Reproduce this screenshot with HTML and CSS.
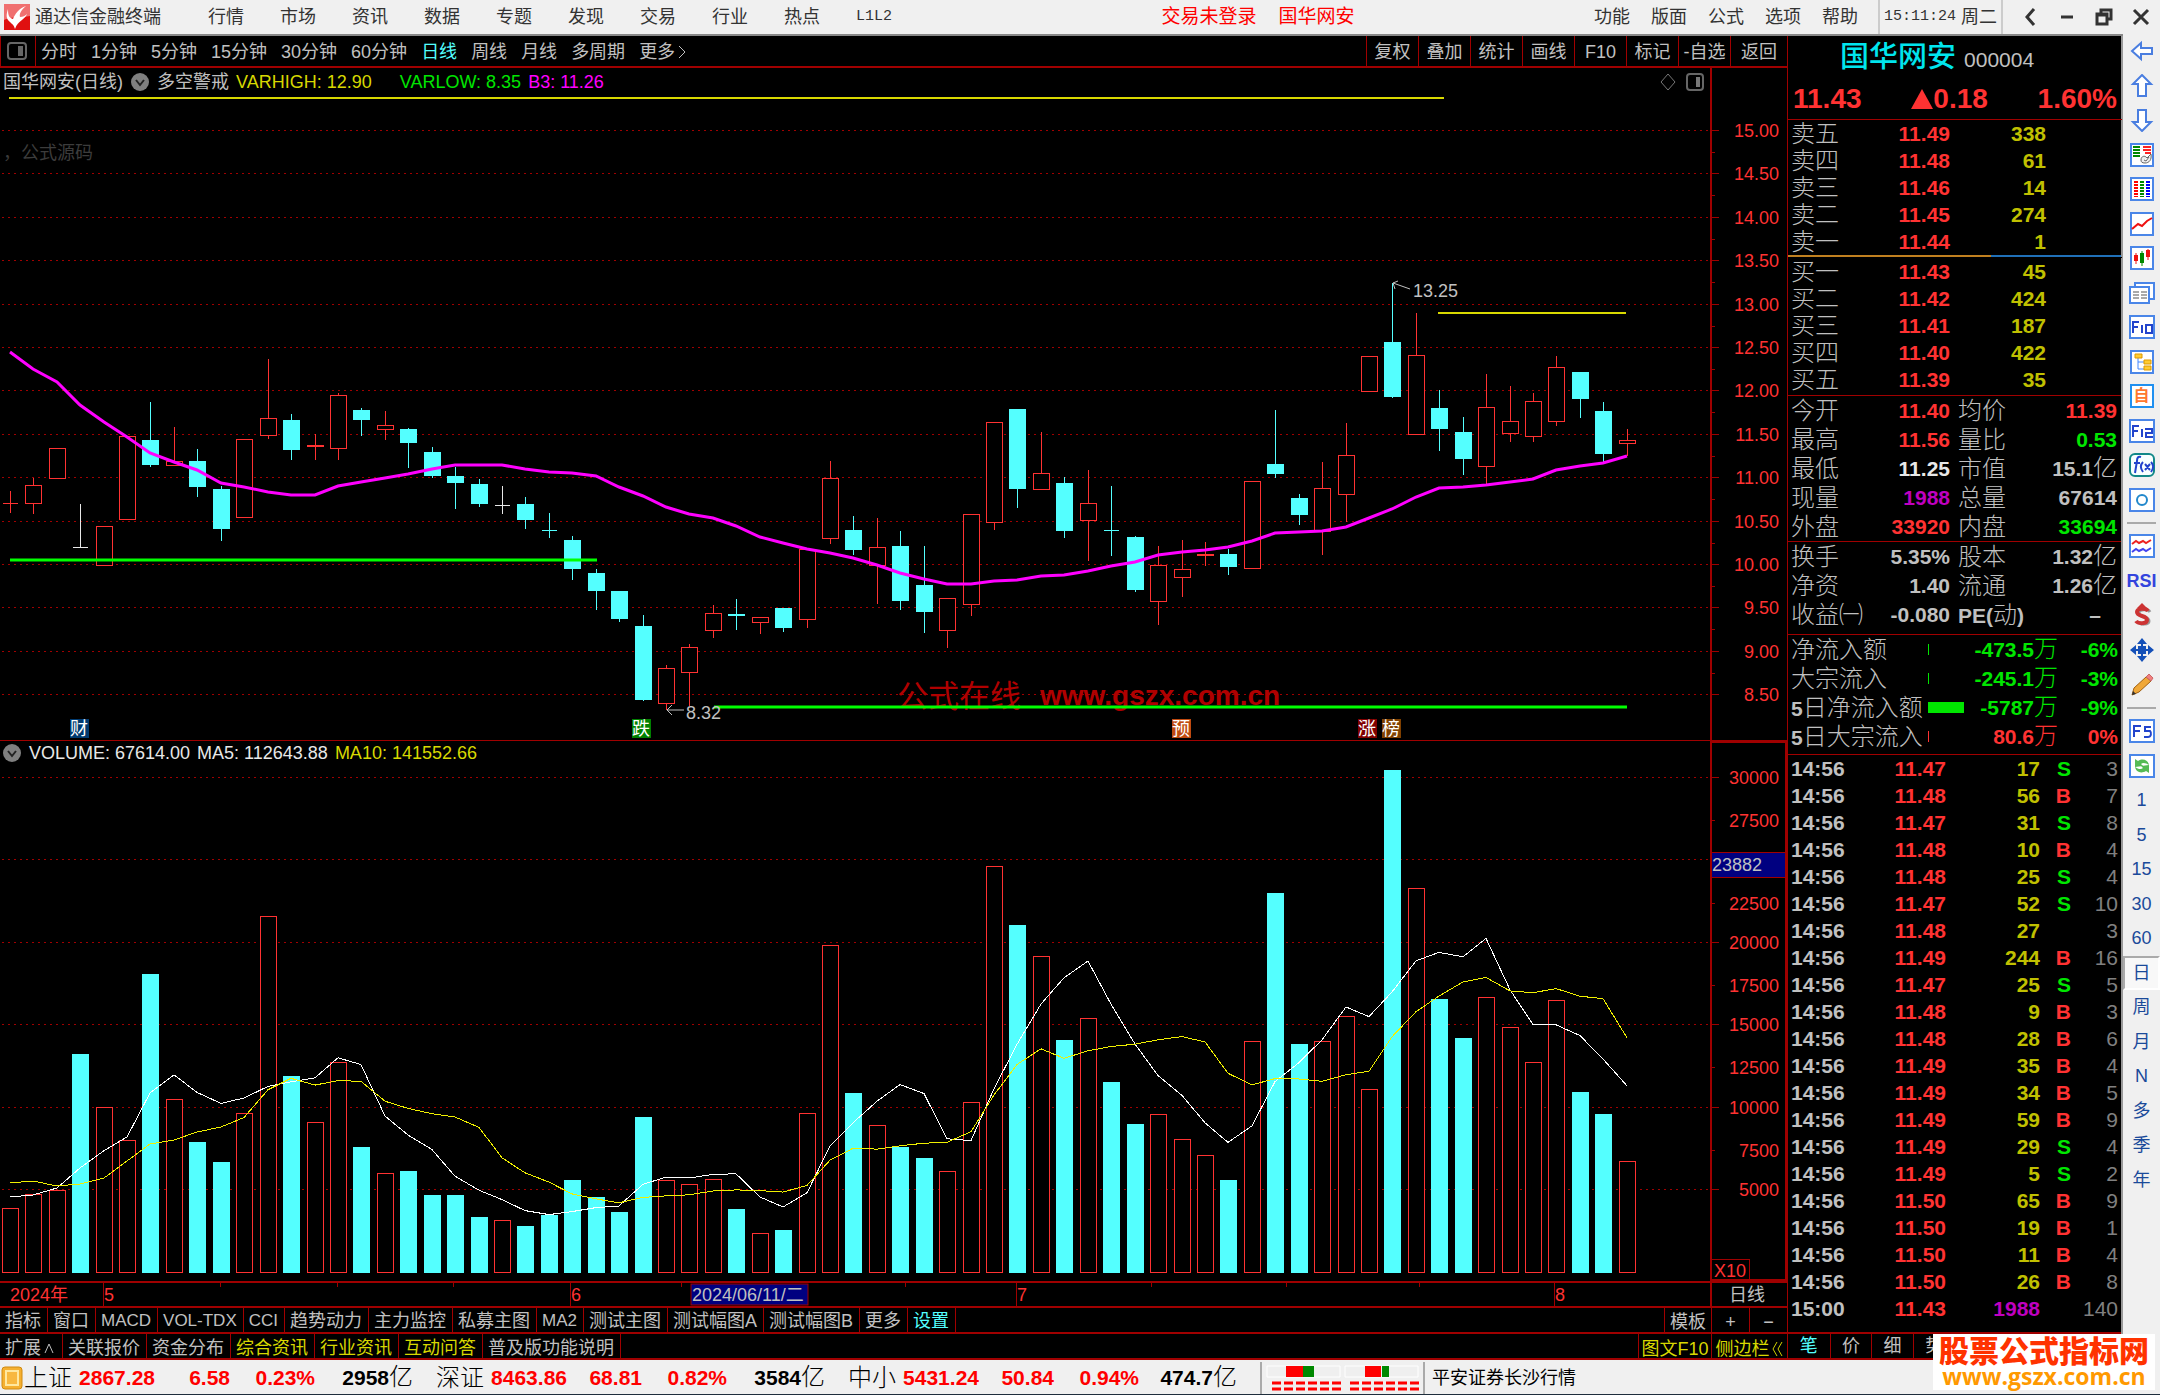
FILE: index.html
```html
<!DOCTYPE html>
<html lang="zh-CN">
<head>
<meta charset="utf-8">
<title>通达信金融终端</title>
<link rel="stylesheet" href="styles.css">
</head>
<body>
<header class="menubar">
  <svg class="logo" width="26" height="26" viewBox="0 0 26 26"><rect width="26" height="26" fill="#e01010"/><path d="M0 0h26v12C18 14 8 12 0 16z" fill="#f07070"/><path d="M4 5c0 6 1 9 5 10 2-5 6-11 13-13-5 4-7 8-6 11 3 0 5-1 7-3-2 6-9 6-12 15-1-4-3-5-5-7-4-3-4-7-2-13z" fill="#fff"/></svg>
  <span class="app-name">通达信金融终端</span>
  <nav class="menus">
    <button>行情</button><button>市场</button><button>资讯</button><button>数据</button><button>专题</button><button>发现</button><button>交易</button><button>行业</button><button>热点</button><button class="mono">L1L2</button>
  </nav>
  <div class="login"><a href="#login">交易未登录</a><a href="#stock">国华网安</a></div>
  <nav class="tools"><button>功能</button><button>版面</button><button>公式</button><button>选项</button><button>帮助</button></nav>
  <div class="clock"><span class="mono">15:11:24</span><span>周二</span></div>
  <div class="window-buttons">
    <button aria-label="后退"><svg width="18" height="18" viewBox="0 0 18 18"><path d="M13 1L6 9l7 8" class="win"/></svg></button>
    <button aria-label="最小化"><svg width="18" height="18" viewBox="0 0 18 18"><path d="M3 9h12" class="win"/></svg></button>
    <button aria-label="还原"><svg width="18" height="18" viewBox="0 0 18 18"><path d="M6 5V2h10v9h-3M2 6h10v10H2zM2 7h10" class="win"/></svg></button>
    <button aria-label="关闭"><svg width="18" height="18" viewBox="0 0 18 18"><path d="M2 2l14 14M16 2L2 16" class="win"/></svg></button>
  </div>
</header>

<main class="workspace">
  <section class="charts">
    <div class="toolbar">
      <button class="layout-toggle" aria-label="侧栏"><svg width="20" height="18" viewBox="0 0 20 18"><rect x="1" y="1" width="18" height="16" rx="3" fill="none" stroke="#666" stroke-width="2"/><rect x="11" y="4" width="5" height="10" fill="#666"/></svg></button>
      <div class="periods">
        <button>分时</button><button>1分钟</button><button>5分钟</button><button>15分钟</button><button>30分钟</button><button>60分钟</button><button class="on">日线</button><button>周线</button><button>月线</button><button>多周期</button><button>更多<svg width="12" height="16" viewBox="0 0 12 16"><path d="M4 2l6 6-6 6" fill="none" stroke="#c0c0c0"/></svg></button>
      </div>
      <div class="actions">
        <button>复权</button><button>叠加</button><button>统计</button><button>画线</button><button>F10</button><button>标记</button><button>-自选</button><button>返回</button>
      </div>
    </div>

    <div class="pane-head">
      <div class="legend">
        <span>国华网安(日线)</span>
        <svg width="20" height="20" viewBox="0 0 20 20"><circle cx="10" cy="10" r="9" fill="#808080"/><path d="M6 8l4 5 4-5" fill="none" stroke="#222" stroke-width="2"/></svg>
        <span>多空警戒</span><span class="yellow">VARHIGH: 12.90</span><span class="green second">VARLOW: 8.35</span><span class="magenta">B3: 11.26</span>
        <span class="pane-icons"><svg width="16" height="18" viewBox="0 0 16 18"><path d="M8 1l7 8-7 8-7-8z" fill="none" stroke="#777"/></svg><svg width="18" height="18" viewBox="0 0 18 18"><rect x="1" y="1" width="16" height="16" rx="3" fill="none" stroke="#666" stroke-width="2"/><rect x="10" y="4" width="4" height="10" fill="#777"/></svg></span>
      </div>
    </div>
    <svg id="price" class="plot" viewBox="0 96 1787 644"></svg>

    <div class="pane-head volume">
      <div class="legend">
        <svg width="20" height="20" viewBox="0 0 20 20"><circle cx="10" cy="10" r="9" fill="#808080"/><path d="M6 8l4 5 4-5" fill="none" stroke="#222" stroke-width="2"/></svg>
        <span class="white">VOLUME: 67614.00</span><span class="white">MA5: 112643.88</span><span class="yellow">MA10: 141552.66</span>
      </div>
      <div class="axis-top"></div>
    </div>
    <svg id="volume" class="plot" viewBox="0 765 1787 516"></svg>
    <svg id="dates" class="plot" viewBox="0 1281 1787 25"></svg>

    <div class="tabs">
      <button>指标</button><button>窗口</button><button class="latin">MACD</button><button class="latin">VOL-TDX</button><button class="latin">CCI</button><button>趋势动力</button><button>主力监控</button><button>私募主图</button><button class="latin">MA2</button><button>测试主图</button><button>测试幅图A</button><button>测试幅图B</button><button>更多</button><button class="cyan">设置</button>
      <div class="tabs-end first"><button>模板</button><button>+</button><button>−</button></div>
    </div>
    <div class="tabs">
      <button>扩展<svg width="15" height="12" viewBox="0 0 15 12"><path d="M4 11l4-9 4 9" fill="none" stroke="#c0c0c0"/></svg></button><button>关联报价</button><button>资金分布</button><button class="yellow">综合资讯</button><button class="yellow">行业资讯</button><button class="yellow">互动问答</button><button>普及版功能说明</button>
      <div class="tabs-end second yellow"><button>图文F10</button><button>侧边栏<svg width="14" height="16" viewBox="0 0 14 16"><path d="M7 1L3 8l4 7M12 1L8 8l4 7" fill="none" stroke="#d0d000"/></svg></button></div>
    </div>
  </section>

  <aside class="quote">
    <div class="quote-head">
      <h1>国华网安 <small>000004</small></h1>
      <p><b>11.43</b><b><svg width="22" height="20" viewBox="0 0 22 20"><path d="M11 0l11 20H0z" fill="#ff3232"/></svg>0.18</b><b>1.60%</b></p>
    </div>
    <table class="book"><tbody>
      <tr><th>卖五</th><td>11.49</td><td>338</td></tr>
      <tr><th>卖四</th><td>11.48</td><td>61</td></tr>
      <tr><th>卖三</th><td>11.46</td><td>14</td></tr>
      <tr><th>卖二</th><td>11.45</td><td>274</td></tr>
      <tr><th>卖一</th><td>11.44</td><td>1</td></tr>
    </tbody></table>
    <div class="ratio"></div>
    <table class="book"><tbody>
      <tr><th>买一</th><td>11.43</td><td>45</td></tr>
      <tr><th>买二</th><td>11.42</td><td>424</td></tr>
      <tr><th>买三</th><td>11.41</td><td>187</td></tr>
      <tr><th>买四</th><td>11.40</td><td>422</td></tr>
      <tr><th>买五</th><td>11.39</td><td>35</td></tr>
    </tbody></table>
    <table class="stats"><tbody>
      <tr><th>今开</th><td class="red">11.40</td><th>均价</th><td class="red">11.39</td></tr>
      <tr><th>最高</th><td class="red">11.56</td><th>量比</th><td class="green">0.53</td></tr>
      <tr><th>最低</th><td class="white">11.25</td><th>市值</th><td>15.1<i>亿</i></td></tr>
      <tr><th>现量</th><td class="purple">1988</td><th>总量</th><td>67614</td></tr>
      <tr><th>外盘</th><td class="red">33920</td><th>内盘</th><td class="green">33694</td></tr>
    </tbody></table>
    <table class="stats extra"><tbody>
      <tr><th>换手</th><td>5.35%</td><th>股本</th><td>1.32<i>亿</i></td></tr>
      <tr><th>净资</th><td>1.40</td><th>流通</th><td>1.26<i>亿</i></td></tr>
      <tr><th>收益㈠</th><td>-0.080</td><th><b>PE(</b>动<b>)</b></th><td class="dash">–</td></tr>
    </tbody></table>
    <table class="flow"><tbody>
      <tr><th>净流入额</th><td><span class="bar"></span></td><td>-473.5<i>万</i></td><td>-6%</td></tr>
      <tr><th>大宗流入</th><td><span class="bar"></span></td><td>-245.1<i>万</i></td><td>-3%</td></tr>
      <tr><th><b>5</b>日净流入额</th><td><span class="bar" style="width:36px"></span></td><td>-5787<i>万</i></td><td>-9%</td></tr>
      <tr class="red"><th><b>5</b>日大宗流入</th><td><span class="bar"></span></td><td>80.6<i>万</i></td><td>0%</td></tr>
    </tbody></table>
    <table class="ticks"><tbody id="ticks"></tbody></table>
    <div class="quote-tabs"><button class="cyan">笔</button><button>价</button><button>细</button><button>势</button><button aria-label="页五"></button><button aria-label="页六"></button><button aria-label="页七"></button><button aria-label="页八"></button></div>
    <div class="site-badge"><strong>股票公式指标网</strong><span>www.gszx.com.cn</span></div>
  </aside>

  <nav class="rail">
    <div class="rail-long">
      <button aria-label="后退"><svg width="24" height="24" viewBox="0 0 24 24"><path d="M2 12l9-8v5h11v6H11v5z" class="arrow"/></svg></button>
      <button aria-label="上"><svg width="24" height="24" viewBox="0 0 24 24"><path d="M12 1l9 9h-5v12H8V10H3z" class="arrow"/></svg></button>
      <button aria-label="下"><svg width="24" height="24" viewBox="0 0 24 24"><path d="M12 23l9-9h-5V2H8v12H3z" class="arrow"/></svg></button>
      <button aria-label="报价"><svg width="24" height="24" viewBox="0 0 24 24"><rect x="1" y="1" width="22" height="22" class="frame"/><path d="M3 4h7M3 7h7M3 10h7M3 13h7" stroke="#080" stroke-width="2"/><path d="M13 4h8M13 7h8M15 10h6" stroke="#f22" stroke-width="2"/><path d="M11 17c0-4 4-5 6-2l4-4c1 6-2 9-6 9-3 0-4-1-4-3zM14 17l2 1 3-4" fill="#eee" stroke="#666"/></svg></button>
      <button aria-label="列表"><svg width="24" height="24" viewBox="0 0 24 24"><rect x="1" y="1" width="22" height="22" class="frame"/><g stroke-width="4" stroke-dasharray="2 1"><path d="M6 4v16" stroke="#f00"/><path d="M12 4v16" stroke="#080"/><path d="M18 4v16" stroke="#00f"/></g></svg></button>
      <button aria-label="分时图"><svg width="24" height="24" viewBox="0 0 24 24"><rect x="1" y="1" width="22" height="22" class="frame"/><path d="M2 17l6-5 4 2 5-5 5-3" fill="none" stroke="#e11" stroke-width="2"/></svg></button>
      <button aria-label="K线图"><svg width="24" height="24" viewBox="0 0 24 24"><rect x="1" y="1" width="22" height="22" class="frame"/><path d="M6 7v11M18 3v11" stroke="#e11"/><path d="M12 5v15" stroke="#080"/><path d="M4 9h4v6H4zM16 4h4v7h-4z" fill="#e11"/><path d="M10 7h4v10h-4z" fill="#080"/></svg></button>
      <button aria-label="多窗口"><svg width="26" height="24" viewBox="0 0 26 24"><rect x="6" y="2" width="19" height="16" class="frame"/><rect x="1" y="6" width="19" height="16" class="frame"/><path d="M4 11h6M4 14h6M4 17h6M12 11h6M12 14h6M12 17h6" stroke="#555"/></svg></button>
      <button aria-label="F10"><svg width="26" height="24" viewBox="0 0 26 24"><rect x="1" y="1" width="24" height="22" class="frame"/><path d="M4 18V7h6M4 12h5M13 10v8M17 10h6v8h-6z" class="glyph"/></svg></button>
      <button aria-label="结构"><svg width="24" height="24" viewBox="0 0 24 24"><rect x="1" y="1" width="22" height="22" class="frame"/><path d="M8 7v12h6M8 12h6" fill="none" stroke="#48f"/><path d="M5 4h7v4H5zM14 10h7v4h-7zM14 16h7v4h-7z" fill="#fc3" stroke="#d90"/></svg></button>
      <button aria-label="自选"><span class="boxed">自</span></button>
      <button aria-label="F12"><svg width="26" height="24" viewBox="0 0 26 24"><rect x="1" y="1" width="24" height="22" class="frame"/><path d="M4 18V7h6M4 12h5M13 10v8M16 10h7v4h-6v4h7" class="glyph"/></svg></button>
      <button aria-label="公式"><svg width="26" height="24" viewBox="0 0 26 24"><rect x="1" y="1" width="24" height="22" rx="5" fill="#f8ffff" stroke="#188" stroke-width="2"/><path d="M12 4c-3-1-4 1-4 4L6 20M5 10h6M14 9c-3 3-3 6 0 10M22 9c3 3 3 6 0 10M16 11l5 6M21 11l-5 6" fill="none" stroke="#2244cc" stroke-width="2"/></svg></button>
      <button aria-label="刷新图"><svg width="26" height="24" viewBox="0 0 26 24"><rect x="1" y="1" width="24" height="22" class="frame"/><circle cx="13" cy="12" r="5" fill="none" stroke="#28c" stroke-width="2"/></svg></button>
    </div>
    <hr>
    <div class="rail-short">
      <button aria-label="多指标"><svg width="26" height="24" viewBox="0 0 26 24"><rect x="1" y="1" width="24" height="22" class="frame"/><path d="M3 10l4-3 3 2 4-2 3 2 5-3" fill="none" stroke="#e22" stroke-width="2"/><path d="M3 18l4-3 3 2 4-2 3 2 5-3" fill="none" stroke="#44e" stroke-width="2"/></svg></button>
      <button class="rsi">RSI</button>
      <button aria-label="卖出"><svg width="24" height="26" viewBox="0 0 24 26"><path d="M20 10c-2-3-11-3-11 1 0 5 10 3 10 8 0 4-9 4-11 1" fill="none" stroke="#999" stroke-width="3"/><path d="M18 9c-2-3-11-3-11 1 0 5 10 3 10 8 0 4-9 4-11 1" fill="none" stroke="#c33" stroke-width="4"/><path d="M12 1l5 5H7z" fill="#c33"/></svg></button>
      <button aria-label="移动"><svg width="24" height="24" viewBox="0 0 24 24"><path d="M12 0l5 6H7zM12 24l5-6H7zM0 12l6-5v10zM24 12l-6-5v10zM8 8h3v3H8zM13 8h3v3h-3zM8 13h3v3H8zM13 13h3v3h-3z" fill="#1450b8"/><path d="M12 6v12M6 12h12" stroke="#1450b8" stroke-width="2"/></svg></button>
      <button aria-label="画笔"><svg width="24" height="24" viewBox="0 0 24 24"><path d="M2 22l2-7L16 4l5 4L9 19z" fill="#f0a838" stroke="#a06010"/><path d="M16 4l3-3 4 4-2 3z" fill="#f08080" stroke="#c66"/><path d="M2 22l1-4 3 3z" fill="#333"/></svg></button>
    </div>
    <hr>
    <div class="rail-long">
      <button aria-label="F5"><svg width="26" height="24" viewBox="0 0 26 24"><rect x="1" y="1" width="24" height="22" class="frame"/><path d="M5 18V7h7M5 12h6M22 8h-6v4h5c2 2 1 6-2 6h-4" class="glyph"/></svg></button>
      <button aria-label="刷新"><svg width="26" height="24" viewBox="0 0 26 24"><rect x="1" y="1" width="24" height="22" class="frame"/><path d="M6 13V5l3 2c5-3 10-1 11 4-3-2-6-3-8-1l2 2zM20 11v8l-3-2c-5 3-10 1-11-4 3 2 6 3 8 1l-2-2z" fill="#5b5"/></svg></button>
      <button>1</button><button>5</button><button>15</button><button>30</button><button>60</button><button class="pressed">日</button><button>周</button><button>月</button><button>N</button><button>多</button><button>季</button><button>年</button>
    </div>
  </nav>
</main>

<footer class="status">
  <svg class="coin" width="22" height="24" viewBox="0 0 22 24"><rect x="1" y="1" width="20" height="22" rx="3" fill="#f5b030" stroke="#d08a10"/><rect x="5" y="5" width="12" height="14" fill="#f8b840" stroke="#ffe8a0" stroke-width="2"/></svg>
  <div class="index"><span>上证</span><b>2867.28</b><b>6.58</b><b>0.23%</b><b class="amount">2958<i>亿</i></b></div>
  <div class="index"><span>深证</span><b>8463.86</b><b>68.81</b><b>0.82%</b><b class="amount">3584<i>亿</i></b></div>
  <div class="index"><span>中小</span><b>5431.24</b><b>50.84</b><b>0.94%</b><b class="amount">474.7<i>亿</i></b></div>
  <div class="meter"><svg width="157" height="26" viewBox="0 0 157 26"><path d="M1 1h73v11H1zM79 1h73v11H79z" fill="#efefef" stroke="#fff"/><path d="M20 1h17v11H20zM99 1h16v11H99z" fill="#f00"/><path d="M37 1h11v11H37zM116 1h7v11h-7z" fill="#080"/><path d="M6 18h71M6 24h71M84 18h71M84 24h71" stroke="#f00" stroke-width="3" stroke-dasharray="9 3"/></svg></div>
  <span class="broker">平安证券长沙行情</span>
</footer>
<script src="script.js"></script>
</body>
</html>
```

FILE: styles.css
```css
* { box-sizing: border-box; }
body {
  margin: 0;
  min-height: 100vh;
  display: flex;
  flex-direction: column;
  background: #000;
  color: #c0c0c0;
  font: 400 18px/24px "Liberation Sans", "Noto Sans CJK SC", sans-serif;
}
button {
  margin: 0; padding: 0; border: 0;
  background: none; color: inherit; font: inherit;
  white-space: nowrap; cursor: pointer;
}
svg { display: block; flex: none; }
b { font-weight: 700; }
i { font-style: normal; font-weight: 300; font-size: 24px; line-height: 0; }
.mono { font-family: "Liberation Mono", monospace; font-size: 15px; }
.yellow { color: #d8d800; }
.green { color: #00e600; }
.magenta { color: #f0f; }
.cyan { color: #54ffff; }
.white { color: #e8e8e8; }
.red { color: #ff3232; }
.purple { color: #c000c0; }

/* menu bar */
.menubar {
  display: flex; align-items: center;
  height: 36px; padding-left: 4px;
  background: #f0f0f0; color: #333;
  border-bottom: 2px solid #888;
}
.app-name { margin-left: 5px; }
.menus { display: flex; gap: 36px; margin-left: 47px; }
.login { display: flex; gap: 22px; margin: 0 auto; padding-left: 30px; font-size: 19px; }
.login a { color: #f00; text-decoration: none; }
.tools { display: flex; gap: 21px; margin-right: 20px; }
.clock {
  display: flex; align-items: center; justify-content: space-between;
  width: 125px; height: 34px; padding: 0 4px;
  border-left: 2px solid #ccc; border-right: 2px solid #ccc;
}
.window-buttons { display: flex; gap: 19px; padding: 0 10px 0 18px; }
.win { fill: none; stroke: #333; stroke-width: 3; }

.workspace { flex: 1; display: grid; grid-template-columns: minmax(0, 1fr) 336px 37px; }

/* charts */
.charts { display: flex; flex-direction: column; }
.toolbar { display: flex; height: 32px; border-bottom: 2px solid #a00000; }
.layout-toggle { width: 36px; padding-left: 6px; border-left: 1px solid #a00000; border-right: 1px solid #a00000; }
.periods { flex: 1; display: flex; align-items: center; gap: 14px; padding: 2px 0 0 5px; }
.periods button { display: flex; align-items: center; }
.periods .on { color: #54ffff; }
.actions { display: grid; grid-template-columns: repeat(7, 52px) 57px; }
.actions button { padding-top: 2px; border-left: 1px solid #a00000; }
.pane-head { display: flex; height: 28px; }
.legend {
  flex: 1; display: flex; align-items: center; gap: 7px;
  padding-left: 3px; margin-right: 75px;
  border-right: 2px solid #a00000; white-space: pre;
}
.legend .second { margin-left: 21px; }
.pane-icons { display: flex; gap: 10px; margin-left: auto; padding-right: 6px; }
.volume { height: 25px; border-top: 1px solid #a00000; }
.volume .legend { padding-left: 2px; margin: 0; }
.axis-top { width: 75px; border-top: 2px solid #a00000; border-right: 2px solid #a00000; }
.plot { width: 100%; height: auto; }
.plot text { fill: #ff3232; font-size: 18px; }
.axis { stroke: #a00000; stroke-width: 2; fill: none; }
.fine { stroke: #a00000; fill: none; shape-rendering: crispEdges; }
.grid { stroke: #a00000; stroke-dasharray: 2 4; shape-rendering: crispEdges; }
.up { stroke: #ff3232; fill: #000; shape-rendering: crispEdges; }
.down { stroke: #54ffff; fill: #54ffff; shape-rendering: crispEdges; }
.flat { stroke: #e8e8e8; shape-rendering: crispEdges; }
.ma { fill: none; stroke: #f0f; stroke-width: 3; }
.ma5, .ma10 { fill: none; stroke: #fff; shape-rendering: crispEdges; }
.ma10 { stroke: #f0f000; }
.plot .note { fill: #c0c0c0; }
.plot .dim { fill: #3c3c3c; }
.plot .flag { fill: #fff; }
.plot .mark { fill: #b00000; font-size: 31px; }
.plot .mark-url { fill: #b00000; font-size: 28px; font-weight: 700; }
.plot .label { text-anchor: end; }

.tabs { display: flex; height: 26px; border-top: 2px solid #a00000; }
.tabs > button { display: flex; align-items: center; padding: 2px 6px 0 5px; border-right: 1px solid #a00000; }
.tabs:last-child { height: 28px; border-bottom: 2px solid #a00000; }
.tabs:last-child button { padding-top: 3px; }
.tabs .latin { font-size: 17px; }
.tabs-end { display: grid; margin-left: auto; border-left: 1px solid #a00000; }
.tabs-end button { display: flex; align-items: center; justify-content: center; padding-top: 2px; }
.tabs-end button + button { border-left: 1px solid #a00000; }
.first { grid-template-columns: 46px 38px 38px; }
.second { grid-template-columns: 72px 76px; }

/* quote panel */
.quote { position: relative; border-left: 1px solid #a00000; border-right: 2px solid #999; display: flex; flex-direction: column; }
.quote-head { height: 83px; padding: 4px 4px 0 5px; }
.quote-head h1 { margin: 0; padding-left: 47px; font-size: 29px; line-height: 34px; font-weight: 500; color: #00e5ee; }
.quote-head small { font-size: 21px; font-weight: 400; color: #c0c0c0; }
.quote-head p { display: flex; justify-content: space-between; margin: 4px 0 0; font-size: 28px; line-height: 36px; color: #ff3232; }
.quote-head b { display: flex; align-items: center; }
table { width: 100%; border-collapse: collapse; table-layout: fixed; }
th { padding: 0 0 0 3px; text-align: left; font-size: 24px; font-weight: 300; white-space: nowrap; }
td { padding: 0; text-align: right; font-size: 21px; font-weight: 700; white-space: nowrap; }
th b { font-size: 21px; line-height: 0; }
.book { border-top: 1px solid #a00000; }
.book tr { height: 27px; }
.book th { width: 72px; line-height: 27px; }
.book td { color: #c0c000; width: 96px; line-height: 27px; }
.book td:nth-child(2) { color: #ff3232; width: 90px; }
.book tr::after { content: ""; display: table-cell; width: 76px; }
.ratio { height: 2px; background: linear-gradient(90deg, #c08020 61%, #2070b8 61%); }
.ratio + .book { border-top: 1px solid #000; margin-bottom: 2px; }
.stats, .flow { border-top: 1px solid #a00000; }
.stats th, .stats td, .flow th, .flow td { height: 29px; line-height: 29px; }
.stats th { width: 74px; }
.stats td { width: 88px; }
.stats th:nth-child(3) { padding-left: 8px; width: 80px; }
.stats td:last-child { width: 91px; padding-right: 4px; }
.stats td.dash:last-child { padding-right: 20px; }
.extra { margin-bottom: 5px; }
.flow { margin-bottom: 3px; color: #00e600; }
.flow th { width: 140px; color: #c0c0c0; }
.flow td:nth-child(2) { width: 38px; }
.flow td:nth-child(3) { width: 92px; }
.flow td:last-child { padding-right: 3px; }
.flow .red { color: #ff3232; }
.bar { display: block; width: 1px; height: 11px; background: currentColor; }
.ticks { border-top: 1px solid #a00000; }
.ticks td { height: 27px; line-height: 27px; }
.ticks td:nth-child(1) { width: 68px; padding-left: 3px; text-align: left; }
.ticks td:nth-child(2) { width: 90px; color: #ff3232; }
.ticks td:nth-child(3) { width: 94px; color: #c0c000; }
.ticks td:nth-child(4) { width: 31px; }
.ticks td:nth-child(5) { padding-right: 3px; color: #808080; font-weight: 400; }
.ticks td.big:nth-child(3) { color: #c000c0; }
.quote-tabs { display: grid; grid-template-columns: repeat(8, 1fr); height: 28px; margin-top: auto; border-top: 2px solid #a00000; border-bottom: 2px solid #a00000; }
.quote-tabs button + button { border-left: 1px solid #a00000; }
.site-badge {
  position: absolute; right: -34px; bottom: -30px; z-index: 1;
  display: flex; flex-direction: column; align-items: center;
  width: 222px; height: 56px; background: #fff;
  font-weight: 700;
}
.site-badge strong { font-size: 30px; line-height: 35px; color: #ff3300; }
.site-badge span { font: 700 23px/14px "Open Sans", "Noto Sans", sans-serif; color: #ff9900; }

/* icon rail */
.rail { display: flex; flex-direction: column; margin-top: -2px; background: #f0f0f0; color: #1a4a9a; }
.rail-long { display: grid; grid-auto-rows: 1fr; height: 483px; }
.rail-short { display: grid; grid-auto-rows: 1fr; height: 173px; }
.rail button { display: flex; align-items: center; justify-content: center; }
.rail hr { width: 29px; margin: 5px auto; border: 0; border-top: 2px solid #aaa; }
.rail .rsi { font-weight: 700; color: #3344dd; }
.rail .pressed { border: 2px solid #aaa; border-right-color: #fff; border-bottom-color: #fff; background: #f8f8f8; }
.boxed { width: 24px; height: 24px; border: 2px solid #2090f0; background: #fff; color: #ff7830; font-size: 16px; line-height: 20px; font-weight: 700; }
.arrow { fill: #fff; stroke: #4a7ee0; stroke-width: 2; }
.frame { fill: #fff; stroke: #4a86e8; stroke-width: 2; }
.glyph { fill: none; stroke: #2244cc; stroke-width: 2; }

/* status bar */
.status {
  display: flex; align-items: center;
  height: 35px; padding: 2px 0 0 1px;
  background: #f0f0f0; color: #000;
  border-bottom: 1px solid #1e2d3c;
}
.index { display: grid; grid-template-columns: 48px 83px 75px 85px 98px; margin-right: 23px; align-items: center; }
.coin { margin-right: 1px; }
.index span { font-size: 24px; font-weight: 300; }
.index b { text-align: right; font-size: 21px; color: #f00; }
.index .amount { color: #000; }
.meter { height: 32px; padding: 3px 0 0 4px; border-left: 2px solid #aaa; border-right: 2px solid #aaa; }
.broker { margin-left: 7px; }
```

FILE: script.js
```js
const STEP = 23.432;
const X0 = 9.9;
const AXIS = 1711;
const x = i => Math.round(X0 + STEP * i);

// kind, high, body top, body bottom, low
const candles = [
  ['u',491,503,503,512],['u',478,485,503,513],['u',448,448,478,478],['f',504,547,547,547],['u',526,526,565,565],
  ['u',436,436,519,519],['d',402,440,465,466],['u',427,461,465,465],['d',449,461,487,496],['d',486,489,529,540],
  ['u',439,439,517,517],['u',359,418,435,438],['d',414,420,450,459],['u',434,445,446,459],['u',393,395,448,459],
  ['d',408,410,420,435],['u',411,425,429,439],['d',428,429,443,467],['d',447,452,476,477],['d',467,476,483,508],
  ['d',479,484,504,506],['f',486,505,505,513],['d',497,504,520,528],['d',513,530,530,537],['d',536,540,569,579],
  ['d',569,573,591,609],['d',591,591,619,621],['d',615,626,700,700],['u',665,668,703,709],['u',644,647,672,705],
  ['u',605,613,630,637],['d',599,614,616,629],['u',617,617,622,633],['d',608,608,628,631],['u',549,549,619,627],
  ['u',461,478,538,543],['d',516,530,550,554],['u',518,547,565,603],['d',531,546,601,609],['d',546,585,612,632],
  ['u',598,598,630,647],['u',514,514,604,615],['u',422,422,522,529],['d',409,409,489,507],['u',432,473,489,489],
  ['d',477,483,531,537],['u',470,503,520,560],['d',486,530,530,555],['d',536,537,590,591],['u',546,565,601,624],
  ['u',540,569,577,596],['u',542,554,555,565],['d',549,554,567,574],['u',481,481,568,568],['d',410,464,474,477],
  ['d',494,498,515,524],['u',462,488,531,554],['u',423,455,494,521],['u',356,356,391,391],['d',283,342,397,397],
  ['u',313,355,434,434],['d',390,408,429,450],['d',417,432,459,474],['u',374,407,466,484],['u',386,421,433,441],
  ['u',393,401,436,441],['u',356,367,421,425],['d',372,372,399,417],['d',402,411,454,461],['u',429,440,443,455]
];

const b3 = [352,369,382,405,422,437,453,462,470,483,487,492,495,495,486,482,478,474,469,465,465,465,469,472,473,476,
  487,496,507,514,518,526,537,543,549,553,558,565,573,579,584,584,581,580,576,575,571,566,562,555,552,550,
  547,541,533,532,531,527,518,509,497,488,487,485,482,479,470,466,463,456];

const vol = [1208,1194,1190,1054,1107,1140,974,1099,1142,1162,1113,916,1076,1122,1062,1147,1173,1171,1195,1195,
  1217,1220,1226,1215,1180,1197,1212,1117,1180,1184,1179,1209,1233,1230,1113,945,1093,1125,1147,1158,
  1171,1102,866,925,956,1040,1018,1082,1124,1114,1139,1155,1180,1041,893,1044,1041,1016,1089,770,
  888,999,1038,997,1027,1062,1000,1092,1114,1161];
const ma5Lead = [1197,1195,1188,1168];
const ma10Lead = [1183,1181,1186,1184,1178,1161,1144,1140,1132];

const line = (cls, x1, y1, x2, y2) => `<path class="${cls}" d="M${x1} ${y1}L${x2} ${y2}"/>`;
const rect = (cls, a, b, w, h) => `<rect class="${cls}" x="${a}" y="${b}" width="${w}" height="${h}"/>`;
const text = (cls, a, b, t) => `<text class="${cls}" x="${a}" y="${b}">${t}</text>`;
const poly = (cls, pts) => `<polyline class="${cls}" points="${pts.map((v, i) => x(i) + ',' + v).join(' ')}"/>`;

function drawPrice() {
  let s = '';
  for (let k = 0; k < 14; k++) {
    const y = Math.round(130 + k * 43.4);
    s += line('grid', 2, y + .5, AXIS, y + .5) + line('fine', AXIS, y + .5, 1719, y + .5);
    if (k < 13) s += line('fine', AXIS, y + 22.5, 1715, y + 22.5);
    s += text('label', 1779, y + 7, (15 - k / 2).toFixed(2));
  }
  s += line('axis', AXIS, 96, AXIS, 740);
  s += text('dim', 3, 159, '，公式源码');
  candles.forEach(([kind, hi, top, bot, lo], i) => {
    const cx = x(i);
    const cls = { u: 'up', d: 'down', f: 'flat' }[kind];
    if (kind === 'u' && bot > top) {
      if (hi < top) s += line(cls, cx + .5, hi, cx + .5, top);
      if (lo > bot) s += line(cls, cx + .5, bot, cx + .5, lo + 1);
      s += rect(cls, cx - 7.5, top + .5, 16, bot - top);
    } else {
      s += line(cls, cx + .5, hi, cx + .5, lo + 1);
      if (bot > top) s += rect(cls, cx - 7.5, top + .5, 16, bot - top - 1);
      else s += line(cls, cx - 7, top + .5, cx + 8, top + .5);
    }
  });
  s += '<path d="M9 98H1444M1438 313H1626" stroke="#d8d800" stroke-width="2"/>';
  s += text('mark', 897, 707, '公式在线') + text('mark-url', 1040, 705, 'www.gszx.com.cn');
  s += '<path d="M10 560H597M714 707H1627" stroke="#00ff00" stroke-width="3"/>';
  s += poly('ma', b3);
  s += '<path d="M684 710H667M672 705L667 710L672 715M1410 289L1393 283M1398 281L1393 283L1395 289" fill="none" stroke="#c0c0c0"/>';
  s += text('note', 686, 719, '8.32') + text('note', 1413, 297, '13.25');
  [[70,'财','#003a70'],[632,'跌','#008000'],[1172,'预','#c04a10'],[1358,'涨','#800000'],[1382,'榜','#804000']].forEach(([a, t, c]) => {
    s += `<rect x="${a}" y="719" width="19" height="19" fill="${c}"/>` + text('flag', a, 735, t);
  });
  document.getElementById('price').innerHTML = s;
}

function average(n, lead) {
  return vol.map((_, i) => i < n - 1 ? lead[i] : vol.slice(i - n + 1, i + 1).reduce((a, b) => a + b) / n);
}

function drawVolume() {
  let s = '';
  for (let k = 0; k < 11; k++) {
    const y = Math.round(777 + k * 41.2) + (k % 2) * 2;
    if (k % 2 === 0) s += line('grid', 2, y + .5, AXIS, y + .5);
    s += line('fine', AXIS, y + .5, k % 2 ? 1715 : 1719, y + .5);
    if (k !== 2) s += text('label', 1779, y + 7, 30000 - k * 2500);
  }
  candles.forEach(([kind], i) => {
    const down = kind === 'd' || i === 3;
    s += rect(down ? 'down' : 'up', x(i) - 7.5, vol[i] + .5, 16, 1272 - vol[i]);
  });
  s += poly('ma5', average(5, ma5Lead)) + poly('ma10', average(10, ma10Lead));
  s += line('axis', AXIS, 765, AXIS, 1281) + line('axis', 1786, 765, 1786, 1281) + line('axis', AXIS, 1280, 1787, 1280);
  s += '<rect x="1712" y="853" width="73" height="24" fill="#000080"/>' + line('fine', 1712, 852.5, 1785, 852.5) + line('fine', 1712, 877.5, 1785, 877.5);
  s += text('note', 1712, 871, '23882');
  s += '<path class="fine" d="M1712 1259.5H1749.5V1280"/>' + text('', 1714, 1277, 'X10');
  document.getElementById('volume').innerHTML = s;
}

function drawDates() {
  let s = line('axis', 0, 1282, 1787, 1282) + line('axis', AXIS, 1281, AXIS, 1306);
  [220, 337, 453, 681, 905, 1151, 1286, 1419].forEach(a => { s += line('fine', a + .5, 1282, a + .5, 1287); });
  [[103, 5], [570, 6], [1016, 7], [1554, 8]].forEach(([a, t]) => {
    s += line('fine', a + .5, 1282, a + .5, 1306) + text('', a + 1, 1301, t);
  });
  s += text('', 10, 1301, '2024年');
  s += '<rect x="691" y="1284" width="117" height="21" fill="#000080" stroke="#a00000"/>' + text('note', 692, 1301, '2024/06/11/二');
  s += text('note', 1729, 1301, '日线');
  document.getElementById('dates').innerHTML = s;
}

const trades = [
  ['11.47',17,'S',3],['11.48',56,'B',7],['11.47',31,'S',8],['11.48',10,'B',4],['11.48',25,'S',4],['11.47',52,'S',10],
  ['11.48',27,'',3],['11.49',244,'B',16],['11.47',25,'S',5],['11.48',9,'B',3],['11.48',28,'B',6],['11.49',35,'B',4],
  ['11.49',34,'B',5],['11.49',59,'B',9],['11.49',29,'S',4],['11.49',5,'S',2],['11.50',65,'B',9],['11.50',19,'B',1],
  ['11.50',11,'B',4],['11.50',26,'B',8],['11.43',1988,'',140]
];
document.getElementById('ticks').innerHTML = trades.map(([price, qty, side, n]) =>
  `<tr><td>${qty > 500 ? '15:00' : '14:56'}</td><td>${price}</td><td class="${qty > 500 ? 'big' : ''}">${qty}</td>` +
  `<td class="${side === 'S' ? 'green' : 'red'}">${side}</td><td>${n}</td></tr>`).join('');

drawPrice();
drawVolume();
drawDates();
```
